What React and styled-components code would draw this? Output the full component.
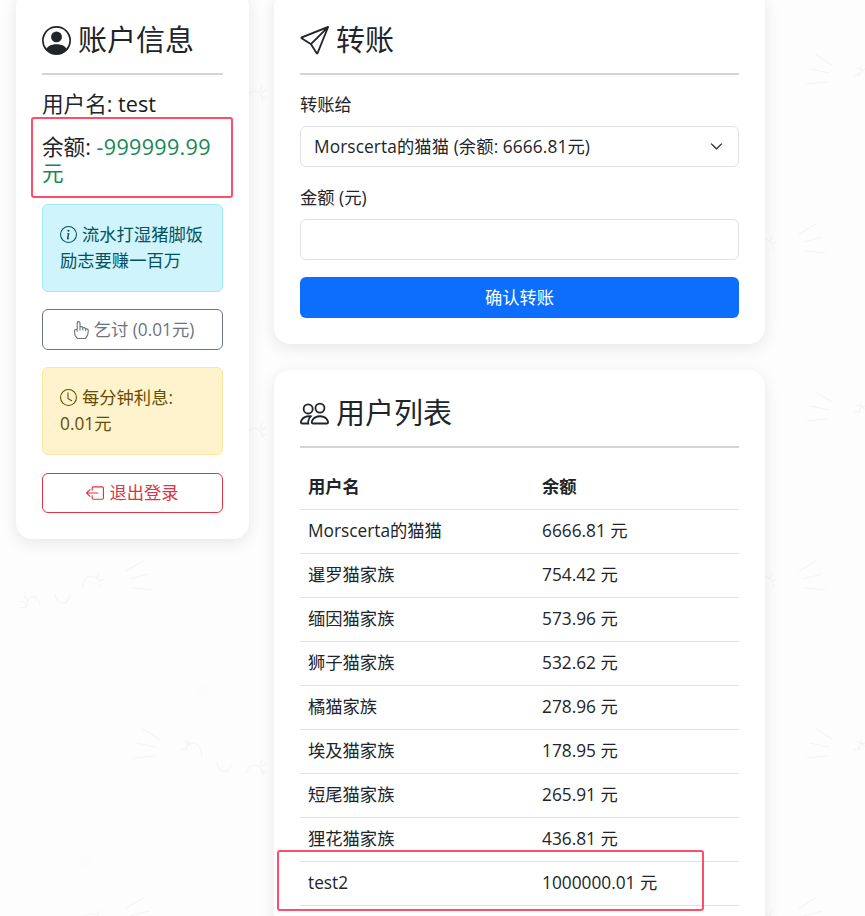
import React from 'react';
import styled, { createGlobalStyle } from 'styled-components';
import { BsPersonCircle, BsSend, BsPeople, BsInfoCircle, BsHandIndex, BsClock, BsBoxArrowLeft, BsChevronDown } from 'react-icons/bs';

const cat = `
<g fill='none' stroke='%23f3f4f5' stroke-width='1.2' stroke-linecap='round'>
<path d='M143 55l16 10M137 69l19 4M134 84l20-2'/>
<path d='M186 76c1-10 14-11 16 7M190 70l-6-2M186 74l-5 2M191 72l-4-6'/>
<path d='M217 88c1 12 12 12 14 3'/>
<path d='M246 99c4-11 14-11 17 2M261 93l5-3M262 97l4 1M260 91l2-5'/>
<path d='M126 234l17-10M130 242l19-5M132 251l20 2'/>
<path d='M83 251c-1-12 10-16 17-6M97 241l2-4M99 244l5-2M100 247l1 2'/>
<path d='M55 258c2 10 12 12 15 0'/>
<path d='M26 270c2-13 11-14 14-2M25 266l-5-2M25 270l-5 1M27 263l-3-5'/>
</g>
<path d='M203 8l9 14h-18z' fill='%23fefbfb'/>
<path d='M85 178l9 14h-18z' fill='%23fefbfb'/>`;

const tile = `url("data:image/svg+xml,<svg xmlns='http://www.w3.org/2000/svg' width='673' height='337'>${cat.replace(/\n/g, '')}</svg>")`;

const Global = createGlobalStyle`
  html, body { margin: 0; padding: 0; height: 916px; overflow: hidden; }
  body {
    background-color: #fdfdfd;
    background-image: ${tile};
    font-family: "Open Sans", "Noto Sans CJK SC", sans-serif;
    font-size: 17.3px;
    line-height: 26px;
    color: #212529;
  }
`;

const Page = styled.div`
  position: relative;
  display: flex;
  align-items: flex-start;
  gap: 25px;
  padding-left: 16px;
  margin-top: -10px;
  height: 926px;
  overflow: hidden;
`;

const Card = styled.section`
  background: #fff;
  border-radius: 16px;
  box-shadow: 0 4px 16px rgba(0, 0, 0, 0.09);
  box-sizing: border-box;
  padding: ${p => p.$top || 33}px 26px ${p => p.$bottom || 26}px;
`;

const LeftColumn = styled.aside`
  width: 233px;
  flex: none;
`;

const RightColumn = styled.main`
  width: 491px;
  flex: none;
  display: flex;
  flex-direction: column;
  gap: 26px;
`;

const Title = styled.h3`
  margin: 0;
  font-size: 29px;
  font-weight: 400;
  line-height: 34px;
  display: flex;
  align-items: center;
  gap: 7px;
  svg { width: 29px; height: 29px; flex: none; }
`;

const Rule = styled.hr`
  border: 0;
  border-top: 2px solid #d4d4d4;
  margin: 16px 0 17px;
`;

const InfoLine = styled.div`
  font-size: 21.6px;
  line-height: 26px;
  margin: -1px 0 18px;
  b { font-weight: 500; color: #1a1d20; }
`;

const Amount = styled.span`
  color: #198754;
  letter-spacing: 0.3px;
`;

const Notice = styled.div`
  border: 1px solid ${p => p.$border};
  background: ${p => p.$bg};
  color: ${p => p.$color};
  border-radius: 6px;
  padding: 17px 17px;
  margin-bottom: 17px;
  white-space: nowrap;
  svg { width: 17px; height: 17px; vertical-align: -2px; margin-right: 5px; }
`;

const OutlineButton = styled.button`
  display: flex;
  align-items: center;
  justify-content: center;
  gap: 5px;
  width: 100%;
  height: ${p => p.$h || 41}px;
  font: inherit;
  background: #fff;
  color: ${p => p.$color};
  border: 1px solid ${p => p.$color};
  border-radius: 6px;
  margin: ${p => p.$mt || 0}px 0 ${p => p.$mb || 0}px;
  padding: 0;
  svg { width: 18px; height: 18px; }
`;

const Label = styled.label`
  display: block;
  margin-bottom: 8px;
`;

const SelectBox = styled.div`
  box-sizing: border-box;
  height: 41px;
  border: 1px solid #dee2e6;
  border-radius: 6px;
  padding: 0 13px;
  display: flex;
  align-items: center;
  justify-content: space-between;
  margin-bottom: 18px;
  span { letter-spacing: 0.1px; }
  svg { width: 13px; height: 13px; color: #343a40; margin-right: 2px; stroke-width: 1; }
`;

const TextInput = styled.input`
  display: block;
  box-sizing: border-box;
  width: 100%;
  height: 41px;
  border: 1px solid #dee2e6;
  border-radius: 6px;
  background: #fff;
  margin: 0 0 17px;
`;

const PrimaryButton = styled.button`
  display: block;
  width: 100%;
  height: 41px;
  border: 0;
  border-radius: 6px;
  background: #0d6efd;
  color: #fff;
  font: inherit;
`;

const Table = styled.table`
  width: 100%;
  border-collapse: collapse;
  table-layout: fixed;
  th, td {
    height: 44px;
    box-sizing: border-box;
    padding: 0 8px;
    text-align: left;
    border-bottom: 1px solid #dee2e6;
  }
  th { font-weight: 700; }
`;

const Mark = styled.div`
  position: absolute;
  left: ${p => p.$x}px;
  top: ${p => p.$y + 10}px;
  width: ${p => p.$w}px;
  height: ${p => p.$h}px;
  box-sizing: border-box;
  border: 2px solid #ff4d6a;
  border-radius: 3px;
  pointer-events: none;
`;

const users = [
  ['Morscerta的猫猫', '6666.81 元'],
  ['暹罗猫家族', '754.42 元'],
  ['缅因猫家族', '573.96 元'],
  ['狮子猫家族', '532.62 元'],
  ['橘猫家族', '278.96 元'],
  ['埃及猫家族', '178.95 元'],
  ['短尾猫家族', '265.91 元'],
  ['狸花猫家族', '436.81 元'],
  ['test2', '1000000.01 元'],
];

export default function App() {
  return (
    <>
      <Global />
      <Page>
        <LeftColumn>
          <Card>
            <Title><BsPersonCircle />账户信息</Title>
            <Rule />
            <InfoLine>用户名: <b>test</b></InfoLine>
            <InfoLine>余额: <Amount>-999999.99 元</Amount></InfoLine>
            <Notice $bg="#cff4fc" $border="#9eeaf9" $color="#055160">
              <BsInfoCircle />流水打湿猪脚饭<br />励志要赚一百万
            </Notice>
            <OutlineButton $color="#6c757d" $mb={17}><BsHandIndex />乞讨 (0.01元)</OutlineButton>
            <Notice $bg="#fff3cd" $border="#ffe69c" $color="#664d03">
              <BsClock />每分钟利息:<br />0.01元
            </Notice>
            <OutlineButton $color="#dc3545" $mt={18} $h={40}><BsBoxArrowLeft />退出登录</OutlineButton>
          </Card>
        </LeftColumn>
        <RightColumn>
          <Card>
            <Title><BsSend />转账</Title>
            <Rule />
            <Label>转账给</Label>
            <SelectBox>
              <span>Morscerta的猫猫 (余额: 6666.81元)</span>
              <BsChevronDown />
            </SelectBox>
            <Label>金额 (元)</Label>
            <TextInput />
            <PrimaryButton>确认转账</PrimaryButton>
          </Card>
          <Card $top={26} $bottom={60}>
            <Title><BsPeople />用户列表</Title>
            <Rule />
            <Table>
              <colgroup><col width="234" /><col /></colgroup>
              <thead><tr><th>用户名</th><th>余额</th></tr></thead>
              <tbody>
                {users.map(([name, money]) => (
                  <tr key={name}><td>{name}</td><td>{money}</td></tr>
                ))}
              </tbody>
            </Table>
          </Card>
        </RightColumn>
        <Mark $x={31} $y={117} $w={202} $h={81} />
        <Mark $x={277} $y={850} $w={427} $h={61} />
      </Page>
    </>
  );
}
